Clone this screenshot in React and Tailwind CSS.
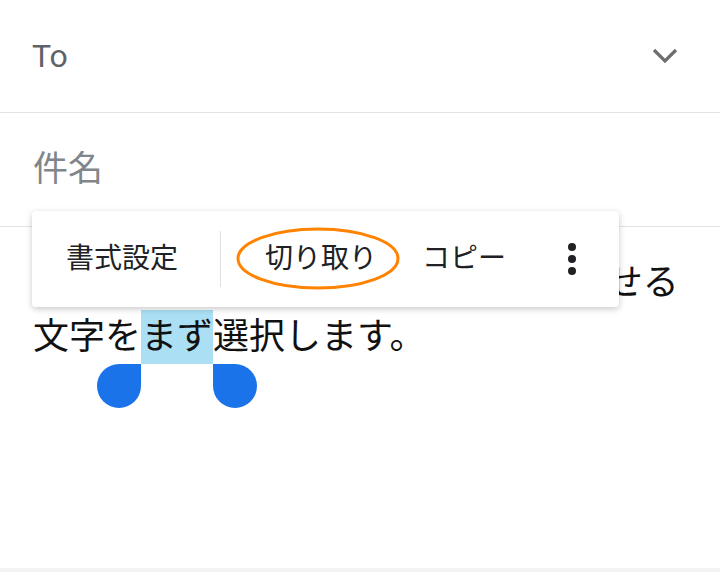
import React from "react";

const font = { fontFamily: "Roboto, 'Noto Sans CJK JP', sans-serif" };

// Selection handle (teardrop): one corner square, points at the selection
const Handle = ({ side }) => (
  <span
    className={`absolute top-full w-[44px] h-[44px] bg-[#1a73e8] ${
      side === "left"
        ? "right-full rounded-l-full rounded-br-full"
        : "left-full rounded-r-full rounded-bl-full"
    }`}
  />
);

const ContextMenu = () => (
  <div className="absolute left-[32px] top-[211px] w-[587px] h-[96px] bg-white rounded-[4px] shadow-[0_2px_6px_rgba(0,0,0,0.22)] flex items-center text-[28px] text-[#202124] leading-none">
    <span className="pl-[34px] pr-[42px]">書式設定</span>
    <span className="w-px h-[56px] bg-[#e0e0e0]" />
    <span className="ml-[44px]">切り取り</span>
    <span className="ml-[45px]">コピー</span>
    <span className="ml-[62px] flex flex-col gap-[4px]">
      <span className="w-[8px] h-[8px] rounded-full bg-[#202124]" />
      <span className="w-[8px] h-[8px] rounded-full bg-[#202124]" />
      <span className="w-[8px] h-[8px] rounded-full bg-[#202124]" />
    </span>
    {/* orange annotation round 切り取り */}
    <svg
      className="absolute left-[204px] top-[16px]"
      width="164"
      height="63"
      viewBox="0 0 164 63"
    >
      <ellipse cx="82" cy="31.5" rx="80" ry="29.5" fill="none" stroke="#ff8300" strokeWidth="3" />
    </svg>
  </div>
);

export default function App() {
  return (
    <div className="relative h-[572px] bg-white flex flex-col overflow-hidden" style={font}>
      {/* To */}
      <div className="h-[113px] border-b border-[#e3e3e3] flex items-center justify-between pl-[32px] pr-[42px]">
        <span className="text-[32px] text-[#5f6368] leading-none">To</span>
        <svg width="26" height="16" viewBox="0 0 26 16">
          <path d="M2 2 L13 13 L24 2" fill="none" stroke="#6e6e6e" strokeWidth="3.2" />
        </svg>
      </div>

      {/* 件名 */}
      <div className="h-[114px] border-b border-[#e3e3e3] flex items-center pl-[33px]">
        <span className="text-[35px] text-[#80868b] leading-none">件名</span>
      </div>

      {/* Body */}
      <div className="flex-1 pt-[29px] pl-[33px] text-[36px] text-[#111] leading-[54px] whitespace-nowrap">
        <div>テキストをカット、コピー、移動させる</div>
        <div>
          文字を
          <span className="relative inline-block align-top h-[54px] bg-[#abdff4]">
            まず
            <Handle side="left" />
            <Handle side="right" />
          </span>
          選択します。
        </div>
      </div>

      <div className="h-[4px] bg-[#f3f3f3]" />

      <ContextMenu />
    </div>
  );
}
